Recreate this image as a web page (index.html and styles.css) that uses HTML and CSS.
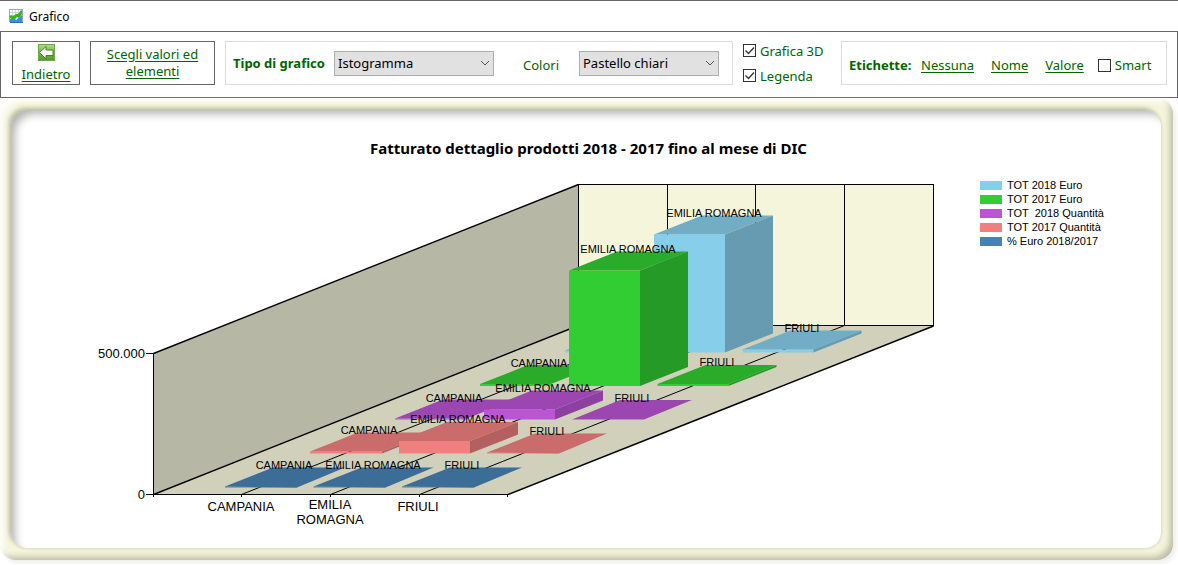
FILE: index.html
```html
<!DOCTYPE html>
<html lang="it">
<head>
<meta charset="utf-8">
<title>Grafico</title>
<link rel="stylesheet" href="styles.css">
</head>
<body>
<header class="titlebar">
  <svg class="app-icon" width="16" height="16" viewBox="0 0 16 16" aria-hidden="true">
    <rect x="1.500" y="1.500" width="13" height="12" fill="#fff" stroke="#9aa5b5"/>
    <path d="M4.500 2v11M7.500 2v11M10.500 2v11M2 4.500h12M2 7.500h12" stroke="#cdd6e4"/>
    <path d="M2 14v-3l3-1 3 2 6-5v7z" fill="#3a8fe0"/>
    <path d="M1 9l2-2 2 1 3-2 2 0 3-4 1 1v3l-3 4-2-1-3 3-4-2z" fill="#35b51e"/>
    <path d="M2 14.500h13" stroke="#2a6fc0"/>
  </svg>
  <span>Grafico</span>
</header>

<nav class="toolbar">
  <button class="tool tool-back" type="button">
    <svg width="17" height="17" viewBox="0 0 17 17" aria-hidden="true">
      <defs><linearGradient id="leaf" x1="0" y1="0" x2="0" y2="1"><stop offset="0" stop-color="#b4d890"/><stop offset=".5" stop-color="#6fb946"/><stop offset="1" stop-color="#4f9a2c"/></linearGradient></defs>
      <rect x=".5" y=".5" width="16" height="16" fill="url(#leaf)" stroke="#6aa848"/>
      <path d="M1.500 8.500l6.500-6v3.500h7v5.500H8v3.500z" fill="#fff" stroke="#4c7f35"/>
    </svg>
    <span>Indietro</span>
  </button>
  <button class="tool tool-pick" type="button"><span>Scegli valori ed elementi</span></button>

  <div class="group group-type">
    <label class="strong" for="tipo">Tipo di grafico</label>
    <select id="tipo" class="select select-type"><option>Istogramma</option></select>
    <label class="colors-label" for="colori">Colori</label>
    <select id="colori" class="select select-colors"><option>Pastello chiari</option></select>
  </div>

  <div class="checks">
    <label class="check"><input type="checkbox" checked>Grafica 3D</label>
    <label class="check"><input type="checkbox" checked>Legenda</label>
  </div>

  <div class="group group-labels">
    <span class="strong">Etichette:</span>
    <a href="#nessuna">Nessuna</a>
    <a href="#nome">Nome</a>
    <a href="#valore">Valore</a>
    <label class="check"><input type="checkbox">Smart</label>
  </div>
</nav>

<main class="frame">
  <section class="panel">
    <h1>Fatturato dettaglio prodotti 2018 - 2017 fino al mese di DIC</h1>
    <div class="chart">
      <svg class="plot" viewBox="80 170 880 370" role="img" aria-label="Istogramma 3D per regione">
        <polygon class="wall-left" points="153,354 578,185 578,326 153,494"/>
        <rect class="wall-back" x="578" y="184" width="356" height="142"/>
        <polygon class="floor" points="153,494 508,494 934,326 578,326"/>
        <path class="axis crisp" d="M578.500 326V184.500H933.500V325.500H578M667.500 184V325M755.500 184V325M844.500 184V325"/>
        <path class="axis" d="M153.500 353.500L578.500 184.500M153.500 494.500L578.500 325.500M508 494.500L933.500 326"/>
        <path class="axis thin" d="M241.500 494.500L667.500 325.500M330.500 494.500L755.500 325.500M419.500 494.500L844.500 325.500"/>
        <path class="axis crisp" d="M153.500 353V497M146 353.500H153M146 494.500H508M241.500 494V497M330.500 494V497M419.500 494V497M507.500 494V497"/>

        <g class="sky">
          <g transform="translate(565 352.500)"><path class="front" d="M0-2H71V0H0z"/><path class="top" d="M0-2L48-21H119L71-2z"/><path class="side" d="M71 0V-2L119-21V-19z"/></g>
          <g transform="translate(654 352.500)"><path class="front" d="M0-118H71V0H0z"/><path class="top" d="M0-118L48-137H119L71-118z"/><path class="side" d="M71 0V-118L119-137V-19z"/></g>
          <g transform="translate(742.500 352.500)"><path class="front" d="M0-3H71V0H0z"/><path class="top" d="M0-3L48-22H119L71-3z"/><path class="side" d="M71 0V-3L119-22V-19z"/></g>
        </g>
        <g class="green">
          <g transform="translate(480 386)"><path class="front" d="M0-2H71V0H0z"/><path class="top" d="M0-2L48-21H119L71-2z"/></g>
          <g transform="translate(569 386)"><path class="front" d="M0-115.500H71V0H0z"/><path class="top" d="M0-115.500L48-134.500H119L71-115.500z"/><path class="side" d="M71 0V-115.500L119-134.500V-19z"/></g>
          <g transform="translate(657.500 386)"><path class="front" d="M0-2H71V0H0z"/><path class="top" d="M0-2L48-21H119L71-2z"/><path class="side" d="M71 0V-2L119-21V-19z"/></g>
        </g>
        <g class="orchid">
          <g transform="translate(395 419.500)"><path class="front" d="M0-1H72V0H0z"/><path class="top" d="M0-1L48-20H120L72-1z"/></g>
          <g transform="translate(484 419.500)"><path class="front" d="M0-10H71V0H0z"/><path class="top" d="M0-10L48-29H119L71-10z"/><path class="side" d="M71 0V-10L119-29V-19z"/></g>
          <g transform="translate(572 419.500)"><path class="top" d="M0 0L48-19.500H120L72 0z"/></g>
        </g>
        <g class="coral">
          <g transform="translate(310 453.500)"><path class="front" d="M0-2H72V0H0z"/><path class="top" d="M0-2L48-21H120L72-2z"/><path class="side" d="M72 0V-2L120-21V-19z"/></g>
          <g transform="translate(399 453.500)"><path class="front" d="M0-12.500H71V0H0z"/><path class="top" d="M0-12.500L48-31.500H119L71-12.500z"/><path class="side" d="M71 0V-12.500L119-31.500V-19z"/></g>
          <g transform="translate(487 453.500)"><path class="front" d="M0-1H72V0H0z"/><path class="top" d="M0-1L48-20H120L72 0z"/></g>
        </g>
        <g class="steel">
          <g transform="translate(225 487.500)"><path class="front" d="M0-1H72V0H0z"/><path class="top" d="M0-1L48-20H120L72 0z"/></g>
          <g transform="translate(313.500 487.500)"><path class="front" d="M0-1H72V0H0z"/><path class="top" d="M0-1L48-20H120L72 0z"/></g>
          <g transform="translate(402 487.500)"><path class="front" d="M0-1H72V0H0z"/><path class="top" d="M0-1L48-20H120L72 0z"/></g>
        </g>

        <g class="point-labels">
          <text x="714" y="217">EMILIA ROMAGNA</text>
          <text x="802" y="332">FRIULI</text>
          <text x="628" y="253">EMILIA ROMAGNA</text>
          <text x="539" y="367">CAMPANIA</text>
          <text x="717" y="366">FRIULI</text>
          <text x="454" y="402">CAMPANIA</text>
          <text x="543" y="392">EMILIA ROMAGNA</text>
          <text x="632" y="402">FRIULI</text>
          <text x="369" y="434">CAMPANIA</text>
          <text x="458" y="423">EMILIA ROMAGNA</text>
          <text x="547" y="435">FRIULI</text>
          <text x="284" y="469">CAMPANIA</text>
          <text x="373" y="469">EMILIA ROMAGNA</text>
          <text x="462" y="469">FRIULI</text>
        </g>
        <g class="axis-labels">
          <text class="end" x="145" y="358">500.000</text>
          <text class="end" x="145" y="499">0</text>
          <text x="241" y="511">CAMPANIA</text>
          <text x="330" y="509">EMILIA</text>
          <text x="330" y="524">ROMAGNA</text>
          <text x="418" y="511">FRIULI</text>
        </g>
      </svg>
      <ul class="legend">
        <li class="sky">TOT 2018 Euro</li>
        <li class="green">TOT 2017 Euro</li>
        <li class="orchid">TOT  2018 Quantità</li>
        <li class="coral">TOT 2017 Quantità</li>
        <li class="steel">% Euro 2018/2017</li>
      </ul>
    </div>
  </section>
</main>
</body>
</html>
```

FILE: styles.css
```css
* { box-sizing: border-box; }

body {
  margin: 0;
  background: #fff;
  color: #000;
  font-family: "Noto Sans", "Open Sans", sans-serif;
  font-size: 13px;
}

.titlebar {
  display: flex;
  align-items: center;
  gap: 5px;
  height: 31px;
  padding-left: 8px;
  border-top: 1px solid #666;
  font-size: 12px;
}

.toolbar {
  display: flex;
  align-items: center;
  height: 67px;
  padding: 0 10px 3px 11px;
  border: 1px solid #666;
  color: #006400;
}

.tool {
  display: flex;
  flex-direction: column;
  align-items: center;
  justify-content: center;
  height: 44px;
  margin: 0 10px 0 0;
  padding: 0;
  border: 1px solid #666;
  background: #fff;
  color: inherit;
  font: inherit;
  line-height: 17px;
  text-decoration: underline;
  text-underline-offset: 2px;
}
.tool-back { width: 68px; gap: 5px; }
.tool-pick { width: 125px; padding: 0 12px; }

.group {
  display: flex;
  align-items: center;
  height: 44px;
  border: 1px solid #dcdcdc;
}
.group-type { flex: 0 1 508px; padding: 0 13px 0 7px; }
.group-labels { flex: 0 1 326px; margin-left: auto; padding: 4px 7px 0; }
.strong { font-weight: 700; }
.group-type .strong { width: 101px; white-space: nowrap; }
.group-labels .strong { width: 72px; }
.group-labels a { margin-right: 17px; }
.group-labels a:last-of-type { margin-right: 14px; }
.group a { color: inherit; text-underline-offset: 2px; }

.select {
  height: 25px;
  margin: 0;
  padding: 0 16px 0 3px;
  border: 1px solid #adadad;
  border-radius: 0;
  appearance: none;
  background: #e1e1e1 url("data:image/svg+xml,%3Csvg xmlns='http://www.w3.org/2000/svg' width='10' height='6'%3E%3Cpath d='M1 1l4 4 4-4' fill='none' stroke='%23555'/%3E%3C/svg%3E") no-repeat right 3px center;
  color: #000;
  font: inherit;
}
.select-type { width: 160px; }
.select-colors { width: 140px; }
.colors-label { margin-left: 29px; width: 56px; padding-top: 3px; }

.checks { display: flex; flex-direction: column; gap: 7px; margin-left: 10px; }
.check { display: flex; align-items: center; gap: 4px; line-height: 18px; }
.check input {
  width: 13px;
  height: 13px;
  margin: 0;
  border: 1px solid #333;
  appearance: none;
  background: #fff;
}
.check input:checked {
  background-image: url("data:image/svg+xml,%3Csvg xmlns='http://www.w3.org/2000/svg' width='11' height='11'%3E%3Cpath d='M1.500 5.500l3 3 5.500-6' fill='none' stroke='%23333' stroke-width='1.300'/%3E%3C/svg%3E");
}

.frame {
  margin: 0 5px 4px 0;
  padding: 12px 12px 12px 11px;
  border-radius: 16px;
  background: #f5f5dc;
  box-shadow: inset 6px 6px 7px -3px #fff, inset -5px -5px 6px -2px #bdbda6, 3px 3px 5px #eee;
}
.panel {
  padding: 27px 0 8px 69px;
  border-radius: 16px;
  background: #fff;
  box-shadow: inset 7px 7px 8px -3px #b4b4b4, -2px -2px 4px #b9b99f, 1px 1px 3px #e2e2cc;
}
.panel h1 {
  margin: 0 64px 0 0;
  font-size: 15px;
  line-height: 22px;
  text-align: center;
}
.chart { display: flex; align-items: flex-start; gap: 20px; margin-top: 11px; }
.plot { flex: 0 1 880px; min-width: 0; }

.wall-left { fill: #b7b7a5; }
.wall-back { fill: #f5f5dc; }
.floor { fill: #d1d1bb; }
.axis { fill: none; stroke: #000; stroke-width: 1.4; }
.crisp { stroke-width: 1; shape-rendering: crispEdges; }
.thin { stroke-width: 1; }

.sky { --front: #87ceeb; --top: #72adc6; --side: #669bb1; }
.green { --front: #32cd32; --top: #2aac2a; --side: #269a26; }
.orchid { --front: #ba55d3; --top: #9c47b1; --side: #8c409f; }
.coral { --front: #f08080; --top: #ca6c6c; --side: #b46060; }
.steel { --front: #4682b4; --top: #3b6d97; --side: #356287; }
.front { fill: var(--front); }
.top { fill: var(--top); }
.side { fill: var(--side); }

.plot text { font-family: "Liberation Sans", Arial, sans-serif; text-anchor: middle; }
.point-labels { font-size: 11px; }
.axis-labels { font-size: 13px; }
.plot .end { text-anchor: end; }

.legend {
  margin: 8px 0 0;
  padding: 0;
  list-style: none;
  font: 11px/14px "Liberation Sans", Arial, sans-serif;
}
.legend li { display: flex; align-items: center; gap: 5px; white-space: pre; }
.legend li::before { content: ""; width: 22px; height: 9px; background: var(--front); }
```
